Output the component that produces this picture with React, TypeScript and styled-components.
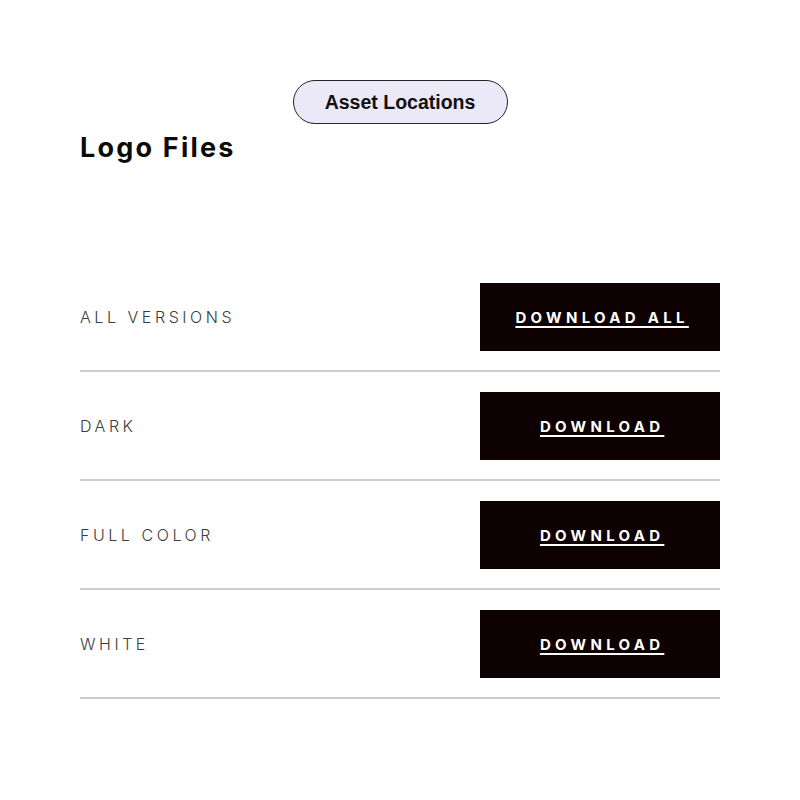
import React, { FC } from 'react'
import styled, { createGlobalStyle } from 'styled-components'

const GlobalStyle = createGlobalStyle`
  html, body {
    margin: 0;
    padding: 0;
    background: #ffffff;
  }
`

type Asset = {
  label: string
  action: string
}

const ASSETS: Asset[] = [
  { label: 'All Versions', action: 'Download All' },
  { label: 'Dark', action: 'Download' },
  { label: 'Full Color', action: 'Download' },
  { label: 'White', action: 'Download' },
]

const App: FC = () => {
  return (
    <>
      <GlobalStyle />
      <StyledPage>
        <StyledPillRow>
          <StyledPill>Asset Locations</StyledPill>
        </StyledPillRow>
        <StyledHeading>Logo Files</StyledHeading>
        <StyledList>
          {ASSETS.map((asset) => (
            <StyledRow key={asset.label}>
              <StyledLabel>{asset.label}</StyledLabel>
              <StyledButton href="#">
                <span>{asset.action}</span>
              </StyledButton>
            </StyledRow>
          ))}
        </StyledList>
      </StyledPage>
    </>
  )
}

export default App

const StyledPage = styled.main`
  width: 640px;
  padding: 80px 80px 0;
  display: flex;
  flex-direction: column;
`

const StyledPillRow = styled.div`
  display: flex;
  justify-content: center;
`

const StyledPill = styled.div`
  box-sizing: border-box;
  width: 215px;
  height: 44px;
  display: flex;
  align-items: center;
  justify-content: center;
  background: #ebe9f7;
  border: 1.5px solid #242424;
  border-radius: 22px;
  font-family: 'Liberation Sans', Arial, sans-serif;
  font-weight: 700;
  font-size: 19.5px;
  color: #111111;
`

const StyledHeading = styled.h2`
  margin: 6px 0 0;
  font-family: Inter, 'Noto Sans', sans-serif;
  font-weight: 700;
  font-size: 27px;
  line-height: 36px;
  letter-spacing: 2.2px;
  color: #0b0b0b;
`

const StyledList = styled.div`
  margin-top: 97px;
  display: flex;
  flex-direction: column;
`

const StyledRow = styled.div`
  display: flex;
  align-items: center;
  justify-content: space-between;
  padding: 20px 0 19px;
  border-bottom: 2px solid #cdcdcd;
`

const StyledLabel = styled.span`
  font-family: Inter, 'Noto Sans', sans-serif;
  font-weight: 300;
  font-size: 16px;
  letter-spacing: 3.55px;
  text-transform: uppercase;
  color: #3c3c3c;
`

const StyledButton = styled.a`
  width: 240px;
  height: 68px;
  display: flex;
  align-items: center;
  justify-content: center;
  background: #0d0101;
  text-decoration: none;

  span {
    font-family: Inter, 'Noto Sans', sans-serif;
    font-weight: 700;
    font-size: 15px;
    letter-spacing: 4.3px;
    margin-right: -4.3px;
    text-transform: uppercase;
    color: #ffffff;
    text-decoration: underline;
    text-underline-offset: 3px;
    text-decoration-thickness: 2px;
  }
`
